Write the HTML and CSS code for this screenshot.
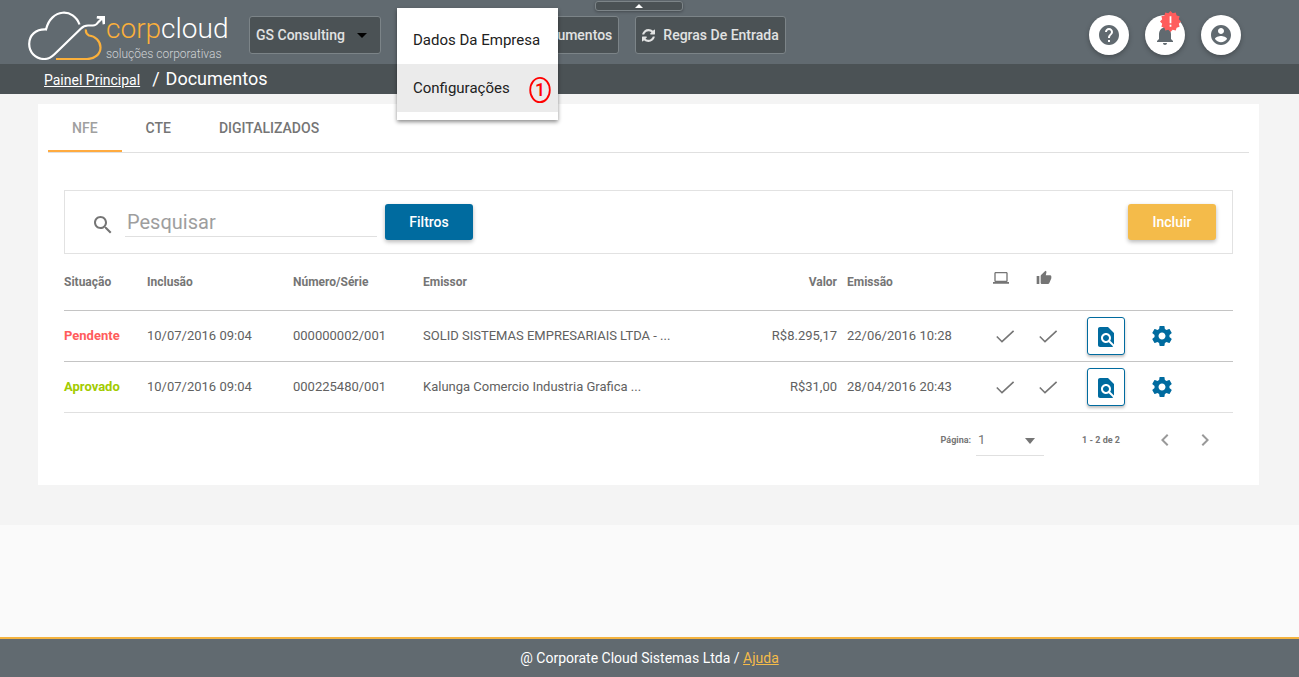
FILE: index.html
```html
<!DOCTYPE html>
<html lang="pt-BR">
<head>
<meta charset="utf-8">
<meta name="viewport" content="width=device-width, initial-scale=1">
<title>Documentos - Corpcloud</title>
<link rel="stylesheet" href="styles.css">
</head>
<body>
<svg class="sprite" aria-hidden="true">
  <symbol id="check" viewBox="0 0 24 24"><path d="M3.800 12.500 9 17.700 20.600 6.900" fill="none" stroke="currentColor" stroke-width="1.600"/></symbol>
  <symbol id="find" viewBox="0 0 24 24"><path d="M20 19.590V8l-6-6H6c-1.100 0-1.990.9-1.990 2L4 20c0 1.100.89 2 1.990 2H18c.45 0 .85-.15 1.190-.4l-4.430-4.430c-.8.520-1.740.830-2.760.830-2.760 0-5-2.240-5-5s2.240-5 5-5 5 2.240 5 5c0 1.020-.31 1.960-.83 2.750L20 19.590zM9 13c0 1.660 1.340 3 3 3s3-1.340 3-3-1.340-3-3-3-3 1.340-3 3z"/></symbol>
  <symbol id="gear" viewBox="0 0 24 24"><path d="M19.430 12.980c.04-.32.07-.64.07-.98s-.03-.66-.07-.98l2.110-1.650c.19-.15.24-.42.12-.64l-2-3.460c-.12-.22-.39-.3-.61-.22l-2.490 1c-.52-.4-1.080-.73-1.690-.98l-.38-2.650C14.460 2.180 14.250 2 14 2h-4c-.25 0-.46.18-.49.42l-.38 2.650c-.61.25-1.170.59-1.690.98l-2.490-1c-.23-.09-.49 0-.61.220l-2 3.460c-.13.22-.07.49.12.640l2.110 1.650c-.04.32-.07.65-.07.980s.03.660.07.980l-2.110 1.650c-.19.150-.24.420-.12.640l2 3.460c.12.220.39.300.61.220l2.490-1c.52.400 1.080.730 1.690.980l.38 2.650c.03.240.24.420.49.420h4c.25 0 .46-.18.490-.42l.38-2.650c.61-.25 1.170-.59 1.690-.98l2.490 1c.23.090.49 0 .61-.22l2-3.460c.12-.22.070-.49-.12-.64l-2.110-1.650zM12 15.500c-1.930 0-3.500-1.570-3.500-3.500s1.570-3.500 3.500-3.500 3.500 1.570 3.500 3.500-1.570 3.500-3.500 3.500z"/></symbol>
  <symbol id="sync" viewBox="0 0 1536 1536"><path d="M1511 928q0 5-1 7-64 268-268 434.500T764 1536q-146 0-282.500-55T238 1324l-129 129q-19 19-45 19t-45-19-19-45V960q0-26 19-45t45-19h448q26 0 45 19t19 45-19 45l-137 137q71 66 161 102t187 36q134 0 250-65t186-179q11-17 53-117 8-23 30-23h192q13 0 22.500 9.500t9.500 22.500zm25-800v448q0 26-19 45t-45 19h-448q-26 0-45-19t-19-45 19-45l138-138Q969 256 768 256q-134 0-250 65T332 500q-11 17-53 117-8 23-30 23H50q-13 0-22.500-9.500T18 608v-7q65-268 270-434.500T768 0q146 0 284 55.500T1297 212l130-129q19-19 45-19t45 19 19 45z"/></symbol>
</svg>

<header class="topbar">
  <a class="logo" href="#" aria-label="corpcloud soluções corporativas">
    <svg class="logo-mark" viewBox="0 0 78 50">
      <g fill="none" stroke-width="2.200">
        <path stroke="#fff" d="M51.500 14.500C46-2 23-2 18 19.500 8 19 1.200 25 1.200 34c0 8 6 15 15 15 4 0 7-1.500 10-4.500L53 18.500q3-3 7-3h5q3 0 5-3l4.500-4.500"/>
        <path stroke="#fbb03b" d="M28 49h31c8 0 13.500-5 13.500-11.500S67 26 61 25.500c-2-1-3.500-3-3-6"/>
      </g>
      <path fill="#fff" d="M69 6h8v8l-2.300.6-.7-5.300-5.400-.7z"/>
    </svg>
    <span class="logo-text">
      <span class="logo-name"><span class="logo-corp">corp</span>cloud</span>
      <span class="logo-tag">soluções corporativas</span>
    </span>
  </a>
  <nav class="actions">
    <button class="nav-btn company">GS Consulting <svg class="caret" viewBox="0 0 10 5"><path d="M0 0h10L5 5z"/></svg></button>
    <div class="menu-wrap">
      <button class="nav-btn" aria-label="Empresa" aria-haspopup="menu" aria-expanded="true"></button>
      <div class="menu" role="menu">
        <button class="menu-item" role="menuitem">Dados Da Empresa</button>
        <button class="menu-item active" role="menuitem">Configurações <svg class="marker" viewBox="0 0 22 28" aria-label="1"><ellipse cx="11" cy="14" rx="9.800" ry="12.200" fill="none" stroke="#f00" stroke-width="1.800"/><text x="11" y="20" text-anchor="middle">1</text></svg></button>
      </div>
    </div>
    <button class="nav-btn"><svg class="nav-icon"><use href="#sync"/></svg>Documentos</button>
    <button class="nav-btn"><svg class="nav-icon"><use href="#sync"/></svg>Regras De Entrada</button>
  </nav>
  <button class="collapse" aria-label="Recolher"><svg viewBox="0 0 8 4"><path d="M0 4h8L4 0z"/></svg></button>
  <div class="user-tools">
    <button class="round" aria-label="Ajuda"><svg viewBox="0 0 24 24"><path d="M12 2C6.480 2 2 6.480 2 12s4.480 10 10 10 10-4.480 10-10S17.520 2 12 2zm1 17h-2v-2h2v2zm2.070-7.750-.9.920C13.450 12.900 13 13.500 13 15h-2v-.5c0-1.100.45-2.100 1.170-2.830l1.240-1.260c.37-.36.590-.86.590-1.410 0-1.100-.9-2-2-2s-2 .9-2 2H8c0-2.210 1.790-4 4-4s4 1.790 4 4c0 .88-.36 1.680-.93 2.250z"/></svg></button>
    <button class="round" aria-label="Notificações"><svg viewBox="0 0 24 24"><path d="M12 22c1.100 0 2-.9 2-2h-4c0 1.100.89 2 2 2zm6-6v-5c0-3.070-1.640-5.640-4.500-6.320V4c0-.83-.67-1.500-1.500-1.500s-1.500.67-1.500 1.500v.68C7.630 5.360 6 7.920 6 11v5l-2 2v1h16v-1l-2-2z"/></svg>
      <svg class="badge" viewBox="0 0 24 24"><path d="M12 0l2.500 2.500L18 1.600l1 3.400 3.400 1-.9 3.500L24 12l-2.500 2.500.9 3.500-3.400 1-1 3.400-3.500-.9L12 24l-2.500-2.500-3.500.9-1-3.400-3.400-1 .9-3.500L0 12l2.500-2.500L1.600 6 5 5l1-3.400 3.500.9z"/><path class="badge-sign" d="M11 6h2v8h-2zm0 9.800h2v2.200h-2z"/></svg></button>
    <button class="round" aria-label="Conta"><svg viewBox="0 0 24 24"><path d="M12 2C6.480 2 2 6.480 2 12s4.480 10 10 10 10-4.480 10-10S17.520 2 12 2zm0 3c1.660 0 3 1.340 3 3s-1.340 3-3 3-3-1.340-3-3 1.340-3 3-3zm0 14.200c-2.500 0-4.710-1.280-6-3.220.03-1.990 4-3.080 6-3.080 1.990 0 5.970 1.090 6 3.080-1.290 1.940-3.500 3.220-6 3.220z"/></svg></button>
  </div>
</header>

<nav class="breadcrumb"><a href="#">Painel Principal</a><span class="slash">/</span><span>Documentos</span></nav>

<main class="content">
  <section class="card">
    <div class="tabs" role="tablist">
      <button class="tab selected" role="tab" aria-selected="true">NFE</button>
      <button class="tab" role="tab">CTE</button>
      <button class="tab" role="tab">DIGITALIZADOS</button>
    </div>
    <div class="panel">
      <form class="toolbar">
        <label class="search-label" for="search" aria-label="Pesquisar"><svg viewBox="0 0 24 24"><path d="M15.500 14h-.79l-.28-.27C15.410 12.590 16 11.110 16 9.500 16 5.910 13.090 3 9.500 3S3 5.910 3 9.500 5.910 16 9.500 16c1.610 0 3.090-.59 4.230-1.570l.27.280v.79l5 4.990L20.490 19l-4.990-5zm-6 0C7.010 14 5 11.990 5 9.500S7.010 5 9.500 5 14 7.010 14 9.500 11.990 14 9.500 14z"/></svg></label>
        <input class="search" id="search" type="text" placeholder="Pesquisar">
        <button class="btn filter" type="button">Filtros</button>
        <button class="btn add" type="button">Incluir</button>
      </form>
      <table class="docs">
        <colgroup><col class="c-status"><col class="c-date"><col class="c-number"><col><col class="c-value"><col class="c-date"><col class="c-check"><col class="c-check"><col class="c-view"><col class="c-config"></colgroup>
        <thead>
          <tr><th>Situação</th><th>Inclusão</th><th>Número/Série</th><th>Emissor</th><th class="value">Valor</th><th>Emissão</th>
            <th class="icon-head"><svg viewBox="0 0 24 24" aria-label="Sistema"><path d="M20 18c1.100 0 2-.9 2-2V5c0-1.100-.9-2-2-2H4c-1.100 0-2 .9-2 2v11c0 1.100.9 2 2 2H0v2.500h24V18h-4zM4 5h16v11H4V5z"/></svg></th>
            <th class="icon-head"><svg viewBox="0 0 24 24" aria-label="Aprovação"><path d="M1 21h4V9H1v12zm22-11c0-1.100-.9-2-2-2h-6.310l.95-4.570.03-.32c0-.41-.17-.79-.44-1.060L14.170 1 7.590 7.590C7.220 7.950 7 8.450 7 9v10c0 1.100.9 2 2 2h9c.83 0 1.540-.5 1.840-1.220l3.020-7.050c.09-.23.140-.47.140-.73V10z"/></svg></th><th></th><th></th></tr>
        </thead>
        <tbody>
          <tr><td class="pending">Pendente</td><td>10/07/2016 09:04</td><td>000000002/001</td><td>SOLID SISTEMAS EMPRESARIAIS LTDA - ...</td><td class="value">R$8.295,17</td><td>22/06/2016 10:28</td><td class="icon-cell"><svg class="check"><use href="#check"/></svg></td><td class="icon-cell"><svg class="check"><use href="#check"/></svg></td><td class="icon-cell"><button class="view" aria-label="Visualizar"><svg><use href="#find"/></svg></button></td><td class="icon-cell"><button class="config" aria-label="Configurar"><svg><use href="#gear"/></svg></button></td></tr>
          <tr><td class="approved">Aprovado</td><td>10/07/2016 09:04</td><td>000225480/001</td><td>Kalunga Comercio Industria Grafica ...</td><td class="value">R$31,00</td><td>28/04/2016 20:43</td><td class="icon-cell"><svg class="check"><use href="#check"/></svg></td><td class="icon-cell"><svg class="check"><use href="#check"/></svg></td><td class="icon-cell"><button class="view" aria-label="Visualizar"><svg><use href="#find"/></svg></button></td><td class="icon-cell"><button class="config" aria-label="Configurar"><svg><use href="#gear"/></svg></button></td></tr>
        </tbody>
      </table>
      <div class="pagination">
        <label for="page">Página:</label>
        <span class="page-select"><select id="page"><option>1</option></select><svg viewBox="0 0 10 6"><path d="M0 0h10L5 6z"/></svg></span>
        <span class="range">1 - 2 de 2</span>
        <button class="arrow" aria-label="Anterior"><svg viewBox="0 0 24 24"><path d="M15.410 7.410 14 6l-6 6 6 6 1.410-1.410L10.830 12z"/></svg></button>
        <button class="arrow" aria-label="Próxima"><svg viewBox="0 0 24 24"><path d="M10 6 8.590 7.410 13.170 12l-4.580 4.590L10 18l6-6z"/></svg></button>
      </div>
    </div>
  </section>
</main>

<footer class="footer">@ Corporate Cloud Sistemas Ltda / <a href="#">Ajuda</a></footer>
</body>
</html>
```

FILE: styles.css
```css
* { box-sizing: border-box; }
body { margin: 0; min-height: 100vh; display: flex; flex-direction: column; background: #fafafa; color: #757575; font-family: Roboto, sans-serif; font-size: 13px; }
button, input, select { font: inherit; color: inherit; border: 0; background: none; padding: 0; margin: 0; }
button { cursor: pointer; }
svg { display: block; fill: currentColor; flex: none; }
.sprite { position: absolute; width: 0; height: 0; }

.topbar { position: relative; display: flex; align-items: center; height: 64px; padding: 6px 58px 0 28px; background: #616a70; }
.logo { display: flex; width: 221px; height: 50px; color: #fff; text-decoration: none; }
.logo-mark { width: 78px; height: 50px; }
.logo-text { display: flex; flex-direction: column; }
.logo-name { font-size: 28px; line-height: 38px; font-weight: 300; white-space: nowrap; }
.logo-corp { color: #fbb03b; }
.logo-tag { font-size: 12px; line-height: 12px; font-weight: 300; color: #d0d3d5; white-space: nowrap; }
.actions { display: flex; gap: 16px; }
.nav-btn { display: flex; align-items: center; height: 38px; padding: 0 6px; border: 1px solid #7c8488; border-radius: 3px; background: #4b5255; color: #e1e2e2; font-size: 14px; font-weight: 500; white-space: nowrap; }
.company { width: 132px; }
.caret { width: 10px; height: 5px; margin-left: 12px; color: #000; }
.nav-icon { width: 13px; height: 13px; margin-right: 8px; }
.menu-wrap { position: relative; width: 92px; }
.menu-wrap .nav-btn { width: 100%; }
.menu { position: absolute; z-index: 2; top: -8px; left: 0; width: 161px; padding: 8px 0; background: #fff; box-shadow: 0 2px 4px rgba(0, 0, 0, .45); }
.menu-item { display: flex; align-items: center; width: 100%; height: 48px; padding: 0 16px; color: #212121; font-size: 15px; white-space: nowrap; }
.menu-item.active { background: #ebebeb; }
.marker { width: 22px; height: 28px; margin-left: 19px; margin-top: 4px; fill: #f00; font-size: 18px; font-weight: 500; }
.collapse { position: absolute; top: 1px; left: calc(50% - 55px); display: flex; align-items: center; justify-content: center; width: 88px; height: 10px; border: 1px solid #7c8488; border-radius: 3px; background: #4b5255; color: #fff; box-shadow: 0 1px 3px rgba(0, 0, 0, .3); }
.collapse svg { width: 8px; height: 4px; }
.user-tools { display: flex; gap: 16px; margin-left: auto; }
.round { position: relative; display: flex; align-items: center; justify-content: center; width: 40px; height: 40px; border-radius: 50%; background: #fff; color: #616a70; box-shadow: 0 2px 5px rgba(0, 0, 0, .28); }
.round svg { width: 24px; height: 24px; }
.round .badge { position: absolute; top: -4px; left: 15px; width: 21px; height: 21px; color: #ff5c5c; }
.badge-sign { fill: #fff; }

.breadcrumb { display: flex; align-items: baseline; height: 30px; padding: 0 44px; background: #4b5255; color: #fff; font-size: 18px; line-height: 30px; }
.breadcrumb a { color: #fff; font-size: 14px; }
.slash { margin: 0 6px 0 12px; }

.content { padding: 10px 40px 40px 38px; background: #f4f4f4; }
.card { padding: 0 10px; background: #fff; }
.tabs { display: flex; border-bottom: 1px solid #e0e0e0; }
.tab { height: 48px; padding: 2px 24px 0; border-bottom: 2px solid transparent; font-size: 14px; font-weight: 500; color: #757575; }
.tab.selected { border-color: #ffab40; color: #a0a0a0; }
.panel { padding: 37px 16px 24px; }
.toolbar { display: flex; align-items: center; height: 64px; padding: 0 16px 0 26px; border: 1px solid #e2e2e2; }
.search-label { margin: 5px 10px 0 0; }
.search-label svg { width: 24px; height: 24px; }
.search { width: 252px; height: 30px; padding: 0 2px; border-bottom: 1px solid #e0e0e0; font-size: 20px; outline: 0; }
.search::placeholder { color: #9e9e9e; opacity: 1; }
.btn { width: 88px; height: 36px; border-radius: 3px; color: #fff; font-size: 14px; font-weight: 500; box-shadow: 0 2px 4px rgba(0, 0, 0, .28); }
.filter { margin-left: 8px; background: #006b9f; }
.add { margin-left: auto; background: #f4bb4a; }

.docs { width: 100%; table-layout: fixed; border-collapse: separate; border-spacing: 0; }
.docs th, .docs td { padding: 0; text-align: left; white-space: nowrap; }
.docs th { height: 57px; border-bottom: 1px solid #c4c4c4; font-size: 12px; font-weight: 700; color: #757575; }
.docs td { height: 51px; padding-bottom: 2px; border-bottom: 1px solid #c4c4c4; color: #616161; }
.docs .icon-cell { padding-bottom: 0; }
.docs tbody tr:last-child td { border-color: #e0e0e0; }
.docs .value { padding-right: 10px; text-align: right; }
.c-status { width: 83px; }
.c-date { width: 146px; }
.c-number { width: 130px; }
.c-value { width: 110px; }
.c-check { width: 43px; }
.c-view { width: 71px; }
.c-config { width: 83px; }
.docs .icon-head { padding-bottom: 8px; }
.icon-head svg { width: 16px; height: 16px; }
.docs .pending { color: #ff5c5c; font-weight: 700; }
.docs .approved { color: #a2cb00; font-weight: 700; }
.check { width: 24px; height: 24px; color: #757575; }
.view { display: flex; align-items: center; justify-content: center; width: 38px; height: 38px; margin-left: 8px; border: 1px solid #006b9f; border-radius: 3px; background: #fff; color: #006b9f; box-shadow: 0 2px 3px rgba(0, 0, 0, .25); }
.view svg { width: 24px; height: 24px; margin-top: 2px; }
.config { display: block; color: #006b9f; }
.config svg { width: 24px; height: 24px; }

.pagination { display: flex; align-items: center; justify-content: flex-end; height: 48px; padding: 6px 8px 0 0; font-size: 9px; font-weight: 700; }
.page-select { position: relative; display: block; width: 68px; margin-left: 5px; }
.page-select select { appearance: none; width: 100%; height: 32px; padding-left: 2px; border-bottom: 1px solid #e0e0e0; font-size: 13px; font-weight: 400; }
.page-select svg { position: absolute; top: 14px; right: 9px; width: 10px; height: 6px; pointer-events: none; }
.range { margin: 0 25px 0 38px; }
.arrow { display: flex; align-items: center; justify-content: center; width: 40px; height: 40px; color: #999; }
.arrow svg { width: 24px; height: 24px; }

.footer { margin-top: auto; height: 40px; border-top: 2px solid #f4b33f; background: #616a70; color: #fff; font-size: 14px; line-height: 38px; text-align: center; }
.footer a { color: #f4bb4a; }
```
